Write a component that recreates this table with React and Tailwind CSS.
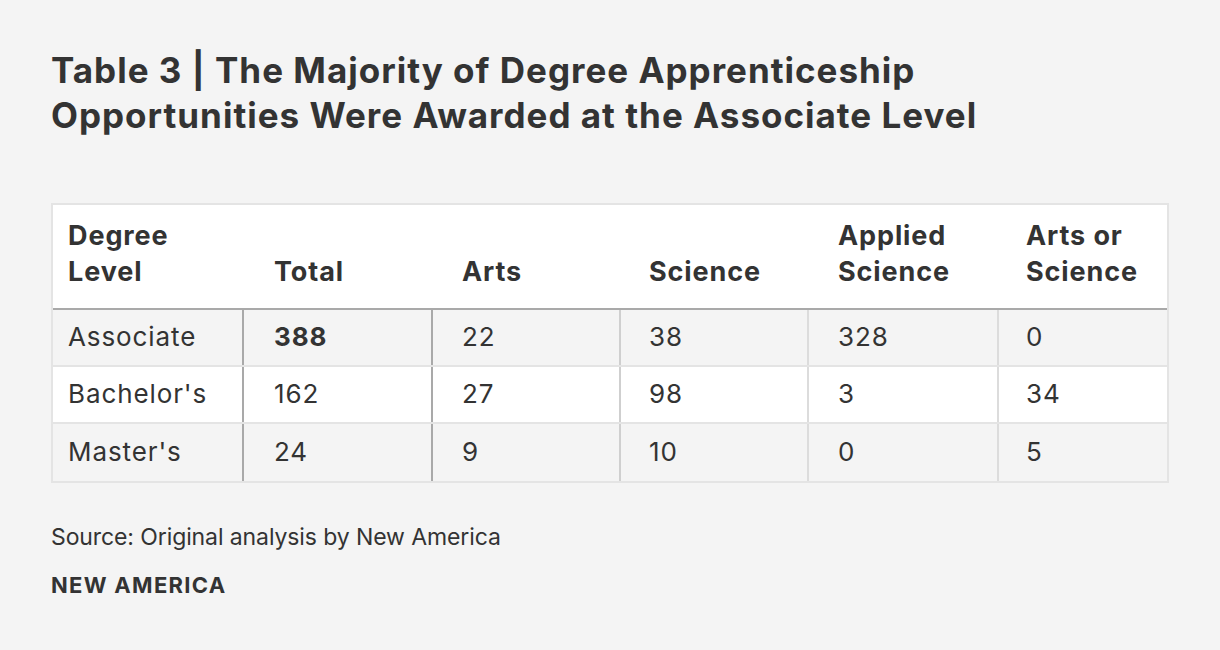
import React from 'react';

const HEAD = [['Degree', 'Level'], ['Total'], ['Arts'], ['Science'], ['Applied', 'Science'], ['Arts or', 'Science']];

const ROWS = [
  ['Associate', '388', '22', '38', '328', '0'],
  ["Bachelor's", '162', '27', '98', '3', '34'],
  ["Master's", '24', '9', '10', '0', '5'],
];

// column widths and the line on each column's right edge
const COLS = [
  { w: 'w-[191px]', line: 'border-r-2 border-[#a9a9a9]', pad: 'pl-[15px]' },
  { w: 'w-[189px]', line: 'border-r-2 border-[#a9a9a9]', pad: 'pl-[30px]' },
  { w: 'w-[188px]', line: 'border-r-2 border-[#cfcfcf]', pad: 'pl-[29px]' },
  { w: 'w-[188px]', line: 'border-r-2 border-[#dcdcdc]', pad: 'pl-[28px]' },
  { w: 'w-[190px]', line: 'border-r-2 border-[#dcdcdc]', pad: 'pl-[29px]' },
  { w: 'flex-1', line: '', pad: 'pl-[27px]' },
];

export default function App() {
  return (
    <div
      className="w-[1220px] h-[650px] bg-[#f4f4f4] text-[#333333] px-[51px] pt-[48px]"
      style={{ fontFamily: 'Inter, "Noto Sans", sans-serif' }}
    >
      <h1 className="text-[35px] leading-[45px] font-bold tracking-[1px]">
        Table 3 | The Majority of Degree Apprenticeship<br />
        Opportunities Were Awarded at the Associate Level
      </h1>

      <div className="mt-[65px] w-[1118px] border-2 border-[#e4e4e4] bg-white">
        <div className="flex h-[105px] border-b-2 border-[#a9a9a9]">
          {HEAD.map((h, i) => (
            <div key={i} className={`${COLS[i].w} ${COLS[i].pad} flex flex-col justify-end pb-[18px] text-[27px] leading-[36px] font-bold tracking-[0.9px]`}>
              {h.map(t => <span key={t}>{t}</span>)}
            </div>
          ))}
        </div>
        {ROWS.map((r, ri) => (
          <div
            key={r[0]}
            className={`flex h-[57px] ${ri % 2 === 0 ? 'bg-[#f4f4f4]' : 'bg-white'} ${ri < 2 ? 'border-b-2 border-[#e4e4e4]' : ''}`}
          >
            {r.map((c, ci) => (
              <div
                key={ci}
                className={`${COLS[ci].w} ${COLS[ci].line} ${COLS[ci].pad} flex items-center pb-[2px] text-[26px] tracking-[0.9px] ${ri === 0 && ci === 1 ? 'font-bold' : 'font-normal'}`}
              >
                {c}
              </div>
            ))}
          </div>
        ))}
      </div>

      <p className="mt-[39px] text-[23px] leading-[30px] tracking-[-0.1px]">Source: Original analysis by New America</p>
      <p className="mt-[18px] text-[22px] leading-[30px] font-bold tracking-[1.3px]">NEW AMERICA</p>
    </div>
  );
}
